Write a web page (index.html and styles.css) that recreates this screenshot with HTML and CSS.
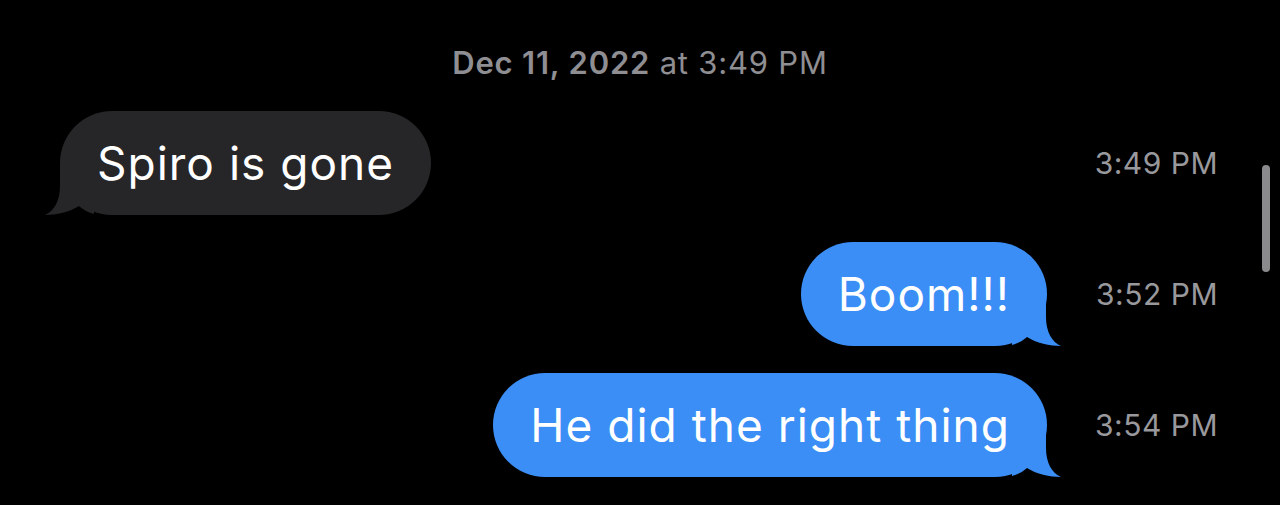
FILE: index.html
```html
<!DOCTYPE html>
<html lang="en">

<head>
    <meta charset="UTF-8" />
    <meta name="viewport" content="width=device-width, initial-scale=1.0" />
    <title>Messages</title>
    <link rel="stylesheet" href="styles.css">
</head>

<body>
    <div class="stamp"><b>Dec 11, 2022</b> at 3:49 PM</div>

    <div class="thread">
        <div class="row them">
            <div class="lane">
                <div class="bubble">
                    Spiro is gone
                    <svg class="tail" viewBox="0 0 50 50"><path d="M0 0 L34 0 L34 21 C34 36 40 46 49 50 C38 50 24 47 15 41 Q10 46 0 49 Z" /></svg>
                </div>
            </div>
            <div class="time">3:49 PM</div>
        </div>
        <div class="row me">
            <div class="lane">
                <div class="bubble">
                    Boom!!!
                    <svg class="tail" viewBox="0 0 50 50"><path d="M0 0 L34 0 L34 21 C34 36 40 46 49 50 C38 50 24 47 15 41 Q10 46 0 49 Z" /></svg>
                </div>
            </div>
            <div class="time">3:52 PM</div>
        </div>
        <div class="row me">
            <div class="lane">
                <div class="bubble">
                    He did the right thing
                    <svg class="tail" viewBox="0 0 50 50"><path d="M0 0 L34 0 L34 21 C34 36 40 46 49 50 C38 50 24 47 15 41 Q10 46 0 49 Z" /></svg>
                </div>
            </div>
            <div class="time">3:54 PM</div>
        </div>
    </div>

    <div class="scrollbar"></div>
</body>

</html>
```

FILE: styles.css
```css
* {
    box-sizing: border-box;
}

body {
    margin: 0;
    height: 100vh;
    overflow: hidden;
    background-color: #000;
    font-family: Inter, "Liberation Sans", sans-serif;
    color: #fff;
    position: relative;
}

.stamp {
    padding-top: 44px;
    height: 111px;
    text-align: center;
    font-size: 31px;
    line-height: 38px;
    letter-spacing: 0.8px;
    color: #8e8e93;
}

.stamp b {
    font-weight: 600;
}

.thread {
    display: flex;
    flex-direction: column;
    gap: 27px;
    padding-left: 60px;
}

.row {
    display: flex;
    align-items: center;
}

.lane {
    flex-grow: 1;
    display: flex;
}

.me .lane {
    justify-content: flex-end;
}

.time {
    width: 233px;
    padding-right: 62px;
    text-align: right;
    font-size: 30px;
    letter-spacing: 0.5px;
    color: #98989d;
}

.bubble {
    position: relative;
    height: 104px;
    line-height: 104px;
    padding: 0 37px;
    border-radius: 52px;
    font-size: 46px;
    letter-spacing: 1px;
    white-space: nowrap;
}

.them .bubble {
    background-color: #262628;
}

.me .bubble {
    background-color: #3a8ef6;
}

/* bubble tails */
.tail {
    position: absolute;
    bottom: 0;
    width: 50px;
    height: 50px;
}

.me .tail {
    right: -15px;
    fill: #3a8ef6;
}

.them .tail {
    left: -16px;
    fill: #262628;
    transform: scaleX(-1);
}

.scrollbar {
    position: absolute;
    top: 165px;
    right: 10px;
    width: 8px;
    height: 107px;
    border-radius: 4px;
    background-color: #8a8a8c;
}
```
